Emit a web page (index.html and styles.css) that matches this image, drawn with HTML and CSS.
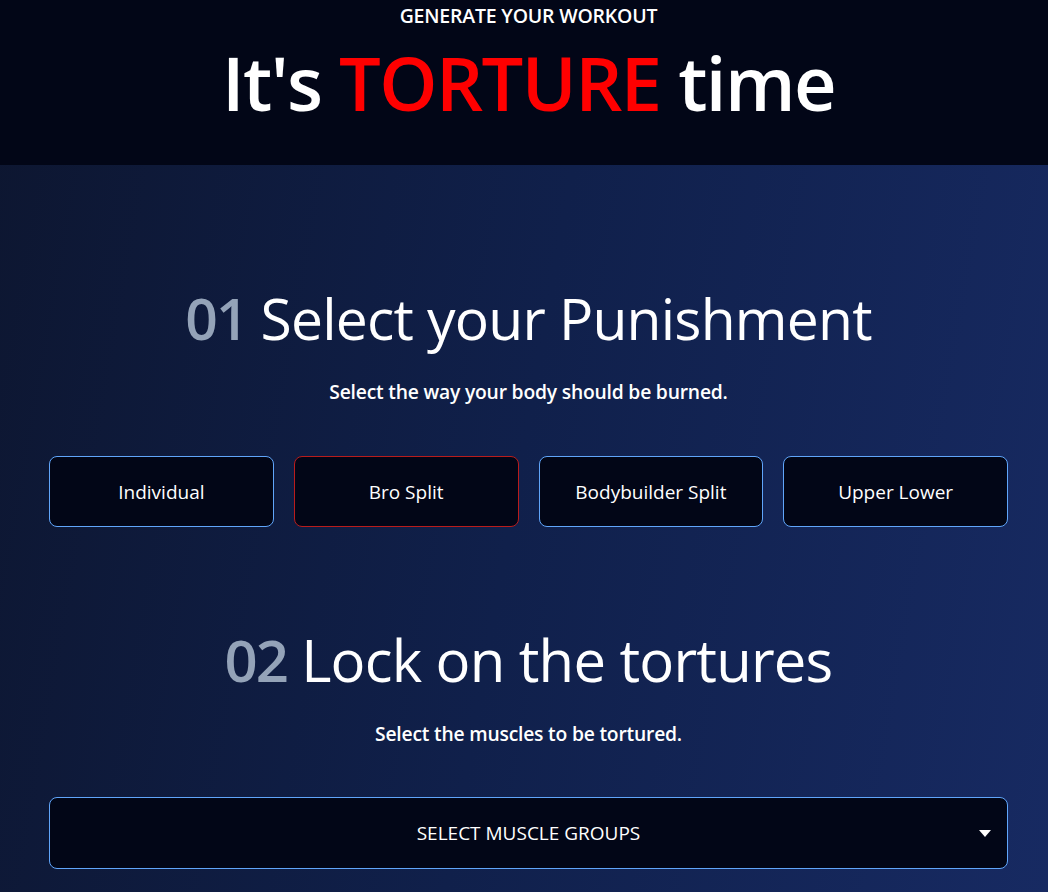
FILE: index.html
```html
<!DOCTYPE html>
<html lang="en">
<head>
<meta charset="utf-8">
<title>Generate your workout</title>
<link rel="stylesheet" href="styles.css">
</head>
<body>
<header class="hero">
  <p class="eyebrow">GENERATE YOUR WORKOUT</p>
  <h1 class="title">It's <span class="accent">TORTURE</span> time</h1>
</header>
<main class="main">
  <section class="step step-one">
    <h2 class="step-title"><span class="step-num">01</span> Select your Punishment</h2>
    <p class="step-sub">Select the way your body should be burned.</p>
    <div class="options">
      <button class="option">Individual</button>
      <button class="option option-active">Bro Split</button>
      <button class="option">Bodybuilder Split</button>
      <button class="option">Upper Lower</button>
    </div>
  </section>
  <section class="step step-two">
    <h2 class="step-title"><span class="step-num">02</span> Lock on the tortures</h2>
    <p class="step-sub">Select the muscles to be tortured.</p>
    <button class="select">
      <span class="select-label">SELECT MUSCLE GROUPS</span>
      <svg class="caret" width="12" height="8" viewBox="0 0 12 8"><path d="M0 0H12L6 7Z" fill="#fff"/></svg>
    </button>
  </section>
</main>
</body>
</html>
```
FILE: styles.css
```css
* { box-sizing: border-box; }
html, body { margin: 0; padding: 0; }
body {
  font-family: "Open Sans", "Noto Sans", sans-serif;
  color: #fff;
  min-height: 892px;
  background: linear-gradient(100deg, #0d1630 0%, #10204b 50%, #172a62 100%);
  overflow: hidden;
}
.hero {
  background: #020617;
  height: 165px;
  text-align: center;
  padding-left: 9px;
}
.eyebrow {
  margin: 0;
  padding-top: 4px;
  font-size: 19.5px;
  font-weight: 600;
  line-height: 24px;
  letter-spacing: -0.2px;
}
.title {
  margin: 0;
  margin-top: 10px;
  font-size: 74px;
  font-weight: 600;
  line-height: 90px;
  letter-spacing: -1.6px;
}
.accent { color: #ff0000; }
.main {
  padding: 0 40px 0 49px;
}
.step { text-align: center; }
.step-one { padding-top: 116px; }
.step-two { padding-top: 96px; }
.step-title {
  margin: 0;
  font-size: 57px;
  font-weight: 400;
  line-height: 74px;
  letter-spacing: -0.8px;
}
.step-two .step-title { font-size: 58px; }
.step-num {
  color: #94a3b8;
  font-weight: 600;
  letter-spacing: -2px;
}
.step-sub {
  margin: 25px 0 0;
  font-size: 19.3px;
  font-weight: 600;
  line-height: 24px;
  letter-spacing: -0.2px;
}
.options {
  margin-top: 52px;
  display: grid;
  grid-template-columns: repeat(4, 1fr);
  gap: 20px;
}
.option, .select {
  font-family: inherit;
  color: #fff;
  background: #020617;
  border: 1px solid #60a5fa;
  border-radius: 8px;
  height: 71px;
  font-size: 19px;
  cursor: pointer;
}
.option-active { border-color: #b91c1c; }
.select {
  margin-top: 51px;
  width: 100%;
  height: 72px;
  position: relative;
  display: flex;
  align-items: center;
  justify-content: center;
  font-size: 19px;
}
.caret {
  position: absolute;
  right: 16px;
  top: 32px;
}
```
